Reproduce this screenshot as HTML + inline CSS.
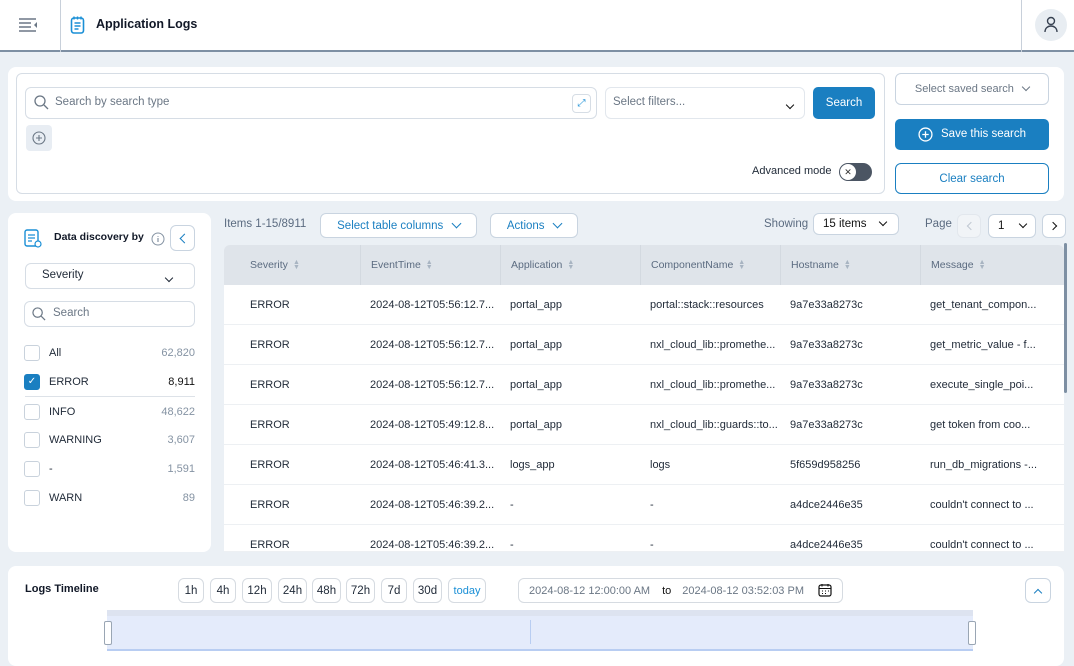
<!DOCTYPE html>
<html><head><style>
*{box-sizing:border-box;margin:0;padding:0}
body{width:1074px;height:658px;overflow:hidden;background:#ebf0f5;font-family:"Liberation Sans",sans-serif;font-size:11.5px;color:#1f2937;position:relative}
.a{position:absolute}
.card{background:#fff;border-radius:8px}
.btn{position:absolute;border:1px solid #c9d4e0;border-radius:6px;background:#fff;color:#1a7fc1;display:flex;align-items:center;justify-content:center}
.chev{display:inline-block;width:7px;height:7px;border-right:1.5px solid currentColor;border-bottom:1.5px solid currentColor;transform:rotate(45deg);margin-top:-4px}
.th{position:absolute;top:245px;height:40px;line-height:40px;color:#5b6b80;font-size:10.5px;border-left:1px solid #d3d9e0;padding-left:10px}
.sort{display:inline-block;margin-left:5px;color:#a8b4c2;font-size:7px;line-height:5px;vertical-align:middle}
.row{position:absolute;left:224px;width:840px;height:40px;border-bottom:1px solid #edf0f3;background:#fff;font-size:11px}
.row span{position:absolute;top:14px;white-space:nowrap}
.cb{position:absolute;left:24px;width:16px;height:16px;border:1px solid #c9d2dc;border-radius:3px}
.fl{position:absolute;left:49px}
.fn{position:absolute;right:879px;color:#8593a3}
.tb{position:absolute;top:578px;height:25px;border:1px solid #d6dbe1;border-radius:6px;background:#fff;display:flex;align-items:center;justify-content:center;font-size:11.5px}
</style></head><body>
<div class="a" style="left:0;top:0;width:1074px;height:52px;background:#fff;border-bottom:2px solid #7d8fa3"></div>
<div class="a" style="left:60px;top:0;width:1px;height:52px;background:#c8d0da"></div>
<div class="a" style="left:1021px;top:0;width:1px;height:52px;background:#c8d0da"></div>
<svg class="a" style="left:19px;top:17px" width="19" height="16" viewBox="0 0 19 16"><g stroke="#6b7785" stroke-width="1.4"><path d="M0 2h17M0 6h12M0 10h12M0 14h17"/></g><path d="M18 5v6l-3-3z" fill="#6b7785"/></svg>
<svg class="a" style="left:70px;top:15px" width="16" height="20" viewBox="0 0 16 20"><rect x="1.5" y="3" width="12" height="15" rx="2.5" fill="none" stroke="#1a8fd6" stroke-width="1.6"/><path d="M4 1.5v3M7.5 1.5v3M11 1.5v3M4.5 8h6M4.5 11h6M4.5 14h4" stroke="#1a8fd6" stroke-width="1.4"/></svg>
<div class="a" style="left:96px;top:17px;font-size:12.5px;font-weight:bold;color:#111827">Application Logs</div>
<div class="a" style="left:1035px;top:9px;width:32px;height:32px;border-radius:50%;background:#e8edf2"></div>
<svg class="a" style="left:1043px;top:16px" width="16" height="18" viewBox="0 0 16 18"><circle cx="8" cy="5" r="3.5" fill="none" stroke="#374151" stroke-width="1.4"/><path d="M2 16c0-4 3-6 6-6s6 2 6 6" fill="none" stroke="#374151" stroke-width="1.4"/></svg>
<div class="a card" style="left:8px;top:67px;width:1056px;height:134px"></div>
<div class="a" style="left:16px;top:73px;width:869px;height:121px;border:1px solid #d6dde5;border-radius:6px"></div>
<div class="a" style="left:25px;top:87px;width:572px;height:32px;border:1px solid #d6dde5;border-radius:6px"></div>
<svg class="a" style="left:34px;top:95px" width="15" height="15" viewBox="0 0 15 15"><circle cx="6" cy="6" r="5" fill="none" stroke="#6b7785" stroke-width="1.3"/><path d="M10 10l4 4" stroke="#6b7785" stroke-width="1.3"/></svg>
<div class="a" style="left:55px;top:96px;color:#6b7785">Search by search type</div>
<div class="a" style="left:572px;top:94px;width:19px;height:19px;border:1px solid #d6dde5;border-radius:4px;color:#1a8fd6;font-size:10px;text-align:center;line-height:17px">⤢</div>
<div class="a" style="left:26px;top:125px;width:26px;height:26px;background:#e8edf3;border-radius:4px"></div>
<svg class="a" style="left:32px;top:131px" width="14" height="14" viewBox="0 0 14 14"><circle cx="7" cy="7" r="6" fill="none" stroke="#6b7785" stroke-width="1.1"/><path d="M7 4v6M4 7h6" stroke="#6b7785" stroke-width="1.1"/></svg>
<div class="a" style="left:605px;top:87px;width:200px;height:32px;border:1px solid #e2e7ed;border-radius:6px"></div>
<div class="a" style="left:613px;top:96px;color:#6b7785">Select filters...</div>
<div class="a" style="left:787px;top:99px;color:#111"><span class="chev" style="width:6px;height:6px"></span></div>
<div class="a" style="left:813px;top:87px;width:62px;height:32px;background:#1a7fc1;border-radius:5px;color:#fff;text-align:center;line-height:32px">Search</div>
<div class="a" style="left:752px;top:165px;color:#1f2937;font-size:11px">Advanced mode</div>
<div class="a" style="left:839px;top:163px;width:33px;height:18px;border-radius:9px;background:#4b5563"></div>
<div class="a" style="left:840px;top:164px;width:16px;height:16px;border-radius:50%;background:#fff;color:#333;font-size:9px;text-align:center;line-height:16px">✕</div>
<div class="btn" style="left:895px;top:73px;width:154px;height:32px;color:#6b7785;font-size:11px">Select saved search&nbsp;&nbsp;&nbsp;<span class="chev" style="width:6px;height:6px"></span></div>
<div class="a" style="left:895px;top:119px;width:154px;height:31px;background:#1a7fc1;border-radius:5px;color:#fff;line-height:31px;padding-left:46px">Save this search</div>
<svg class="a" style="left:918px;top:127px" width="15" height="15" viewBox="0 0 14 14"><circle cx="7" cy="7" r="6" fill="none" stroke="#fff" stroke-width="1.2"/><path d="M7 4v6M4 7h6" stroke="#fff" stroke-width="1.2"/></svg>
<div class="btn" style="left:895px;top:163px;width:154px;height:31px;border-color:#1a7fc1">Clear search</div>
<div class="a card" style="left:8px;top:213px;width:203px;height:339px"></div>
<svg class="a" style="left:24px;top:229px" width="18" height="19" viewBox="0 0 18 19"><rect x="1" y="1" width="13" height="16" rx="2" fill="none" stroke="#1a8fd6" stroke-width="1.4"/><path d="M4 6h7M4 9h7M4 12h4" stroke="#1a8fd6" stroke-width="1.3"/><circle cx="14" cy="15" r="3" fill="#fff" stroke="#1a8fd6" stroke-width="1.2"/></svg>
<div class="a" style="left:54px;top:231px;font-weight:bold;font-size:10.5px;color:#111827">Data discovery by</div>
<svg class="a" style="left:151px;top:232px" width="14" height="14" viewBox="0 0 14 14"><circle cx="7" cy="7" r="6" fill="none" stroke="#8593a3" stroke-width="1"/><path d="M7 6v4M7 4v.8" stroke="#8593a3" stroke-width="1.2"/></svg>
<div class="btn" style="left:170px;top:225px;width:25px;height:26px"><span class="chev" style="transform:rotate(135deg);margin:0 0 0 3px"></span></div>
<div class="a" style="left:25px;top:263px;width:170px;height:26px;border:1px solid #d6dde5;border-radius:6px"></div>
<div class="a" style="left:42px;top:269px">Severity</div>
<div class="a" style="left:166px;top:272px"><span class="chev" style="width:6px;height:6px"></span></div>
<div class="a" style="left:24px;top:301px;width:171px;height:26px;border:1px solid #d6dde5;border-radius:6px"></div>
<svg class="a" style="left:32px;top:307px" width="14" height="14" viewBox="0 0 15 15"><circle cx="6" cy="6" r="5" fill="none" stroke="#6b7785" stroke-width="1.3"/><path d="M10 10l4 4" stroke="#6b7785" stroke-width="1.3"/></svg>
<div class="a" style="left:53px;top:307px;color:#6b7785">Search</div>
<div class="cb" style="top:345px"></div><div class="fl" style="top:347px;font-size:11px">All</div><div class="fn" style="top:347px;font-size:11px">62,820</div>
<div class="cb" style="top:374px;background:#1a7fc1;border-color:#1a7fc1;color:#fff;font-size:10px;text-align:center;line-height:14px">✓</div><div class="fl" style="top:376px;font-size:11px">ERROR</div><div class="fn" style="top:376px;font-size:11px;color:#111">8,911</div>
<div class="a" style="left:25px;top:396px;width:170px;height:1px;background:#dde2e8"></div>
<div class="cb" style="top:404px"></div><div class="fl" style="top:406px;font-size:11px">INFO</div><div class="fn" style="top:406px;font-size:11px">48,622</div>
<div class="cb" style="top:432px"></div><div class="fl" style="top:434px;font-size:11px">WARNING</div><div class="fn" style="top:434px;font-size:11px">3,607</div>
<div class="cb" style="top:461px"></div><div class="fl" style="top:463px;font-size:11px">-</div><div class="fn" style="top:463px;font-size:11px">1,591</div>
<div class="cb" style="top:490px"></div><div class="fl" style="top:492px;font-size:11px">WARN</div><div class="fn" style="top:492px;font-size:11px">89</div>
<div class="a" style="left:224px;top:218px;color:#5b6b80">Items 1-15/8911</div>
<div class="btn" style="left:320px;top:213px;width:157px;height:25px">Select table columns&nbsp;&nbsp;&nbsp;<span class="chev"></span></div>
<div class="btn" style="left:490px;top:213px;width:88px;height:25px">Actions&nbsp;&nbsp;&nbsp;<span class="chev"></span></div>
<div class="a" style="left:764px;top:218px;color:#5b6b80">Showing</div>
<div class="btn" style="left:813px;top:213px;width:86px;height:22px;color:#111;justify-content:space-between;padding:0 12px 0 9px">15 items<span class="chev" style="width:6px;height:6px"></span></div>
<div class="a" style="left:925px;top:218px;color:#5b6b80">Page</div>
<div class="btn" style="left:957px;top:214px;width:24px;height:24px;background:#f1f4f7;border-color:#e2e7ed;color:#c0c8d2"><span class="chev" style="transform:rotate(135deg);margin:0 0 0 3px;width:6px;height:6px"></span></div>
<div class="btn" style="left:988px;top:214px;width:48px;height:24px;color:#111;justify-content:space-between;padding:0 9px">1<span class="chev" style="width:6px;height:6px"></span></div>
<div class="btn" style="left:1042px;top:214px;width:24px;height:24px;color:#111"><span class="chev" style="transform:rotate(-45deg);margin:0 3px 0 0;width:6px;height:6px"></span></div>
<div class="a" style="left:224px;top:245px;width:840px;height:40px;background:#dfe4ea;border-radius:6px 6px 0 0"></div>
<div class="th" style="left:240px;border:none">Severity<span class="sort">▲<br>▼</span></div>
<div class="th" style="left:360px">EventTime<span class="sort">▲<br>▼</span></div>
<div class="th" style="left:500px">Application<span class="sort">▲<br>▼</span></div>
<div class="th" style="left:640px">ComponentName<span class="sort">▲<br>▼</span></div>
<div class="th" style="left:780px">Hostname<span class="sort">▲<br>▼</span></div>
<div class="th" style="left:920px">Message<span class="sort">▲<br>▼</span></div>
<div class="row" style="top:285px"><span style="left:26px">ERROR</span><span style="left:146px">2024-08-12T05:56:12.7...</span><span style="left:286px">portal_app</span><span style="left:426px">portal::stack::resources</span><span style="left:566px">9a7e33a8273c</span><span style="left:706px">get_tenant_compon...</span></div>
<div class="row" style="top:325px"><span style="left:26px">ERROR</span><span style="left:146px">2024-08-12T05:56:12.7...</span><span style="left:286px">portal_app</span><span style="left:426px">nxl_cloud_lib::promethe...</span><span style="left:566px">9a7e33a8273c</span><span style="left:706px">get_metric_value - f...</span></div>
<div class="row" style="top:365px"><span style="left:26px">ERROR</span><span style="left:146px">2024-08-12T05:56:12.7...</span><span style="left:286px">portal_app</span><span style="left:426px">nxl_cloud_lib::promethe...</span><span style="left:566px">9a7e33a8273c</span><span style="left:706px">execute_single_poi...</span></div>
<div class="row" style="top:405px"><span style="left:26px">ERROR</span><span style="left:146px">2024-08-12T05:49:12.8...</span><span style="left:286px">portal_app</span><span style="left:426px">nxl_cloud_lib::guards::to...</span><span style="left:566px">9a7e33a8273c</span><span style="left:706px">get token from coo...</span></div>
<div class="row" style="top:445px"><span style="left:26px">ERROR</span><span style="left:146px">2024-08-12T05:46:41.3...</span><span style="left:286px">logs_app</span><span style="left:426px">logs</span><span style="left:566px">5f659d958256</span><span style="left:706px">run_db_migrations -...</span></div>
<div class="row" style="top:485px"><span style="left:26px">ERROR</span><span style="left:146px">2024-08-12T05:46:39.2...</span><span style="left:286px">-</span><span style="left:426px">-</span><span style="left:566px">a4dce2446e35</span><span style="left:706px">couldn't connect to ...</span></div>
<div class="row" style="top:525px;height:27px;overflow:hidden"><span style="left:26px">ERROR</span><span style="left:146px">2024-08-12T05:46:39.2...</span><span style="left:286px">-</span><span style="left:426px">-</span><span style="left:566px">a4dce2446e35</span><span style="left:706px">couldn't connect to ...</span></div>
<div class="a" style="left:1064px;top:243px;width:3px;height:150px;background:#7d8fa3;border-radius:2px"></div>
<div class="a card" style="left:8px;top:566px;width:1056px;height:100px"></div>
<div class="a" style="left:25px;top:583px;font-weight:bold;font-size:11px;color:#111827">Logs Timeline</div>
<div class="tb" style="left:178px;width:26px">1h</div>
<div class="tb" style="left:210px;width:26px">4h</div>
<div class="tb" style="left:242px;width:30px">12h</div>
<div class="tb" style="left:278px;width:29px">24h</div>
<div class="tb" style="left:312px;width:29px">48h</div>
<div class="tb" style="left:346px;width:29px">72h</div>
<div class="tb" style="left:381px;width:26px">7d</div>
<div class="tb" style="left:413px;width:29px">30d</div>
<div class="tb" style="left:448px;width:38px;color:#1a8fd6;font-size:11px">today</div>
<div class="tb" style="left:518px;width:325px;justify-content:flex-start;padding-left:10px;color:#6b7785;font-size:11px">2024-08-12 12:00:00 AM<span style="color:#111;margin:0 11px 0 12px">to</span>2024-08-12 03:52:03 PM</div>
<svg class="a" style="left:818px;top:583px" width="14" height="14" viewBox="0 0 14 14"><rect x="1" y="2" width="12" height="11" rx="2" fill="#fff" stroke="#111" stroke-width="1.2"/><path d="M1 5.5h12M4 1v2.5M10 1v2.5M4 8h1M7 8h1M10 8h1M4 10.5h1M7 10.5h1" stroke="#111" stroke-width="1.1"/></svg>
<div class="btn" style="left:1025px;top:578px;width:26px;height:25px"><span class="chev" style="transform:rotate(-135deg);margin:4px 0 0 0;width:6px;height:6px"></span></div>
<div class="a" style="left:107px;top:610px;width:866px;height:6px;background:#dde3f0"></div>
<div class="a" style="left:107px;top:616px;width:866px;height:35px;background:#e4ebfb;border-bottom:2px solid #b8cdf2"></div>
<div class="a" style="left:530px;top:620px;width:1px;height:24px;background:#b8cdf2"></div>
<div class="a" style="left:104px;top:621px;width:8px;height:24px;background:#fff;border:1px solid #9aa6b4;border-radius:2px"></div>
<div class="a" style="left:968px;top:621px;width:8px;height:24px;background:#fff;border:1px solid #9aa6b4;border-radius:2px"></div>
</body></html>
